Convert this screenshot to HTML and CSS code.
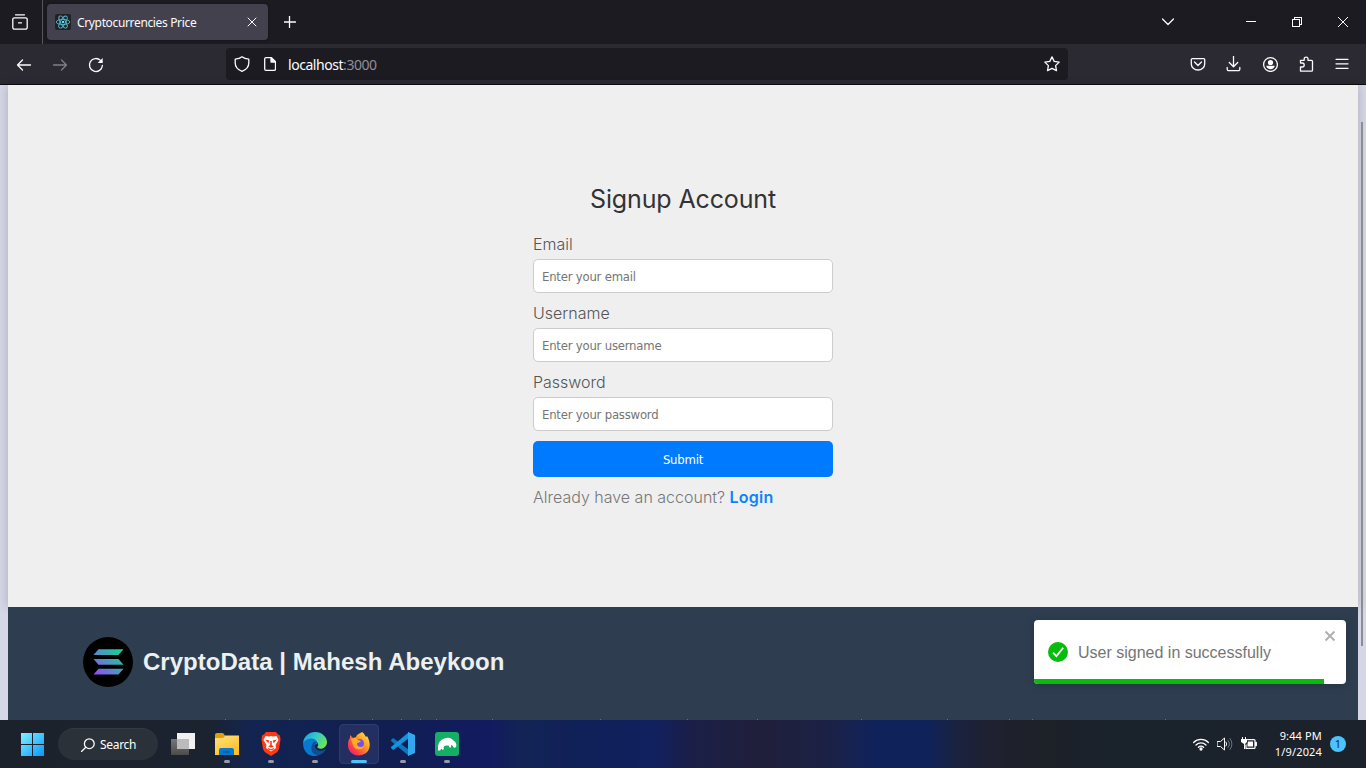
FILE: index.html
```html
<!DOCTYPE html>
<html lang="en">
<head>
<meta charset="utf-8">
<title>Cryptocurrencies Price</title>
<link rel="stylesheet" href="styles.css">
</head>
<body>
<header class="tabs">
  <div class="recent"><svg width="16" height="16" viewBox="0 0 16 16" class="line"><path d="M3.500.800h9M2.300 3.800h11.400a1.500 1.500 0 0 1 1.500 1.500v8.100a1.800 1.800 0 0 1-1.800 1.800H2.600a1.800 1.800 0 0 1-1.800-1.800V5.300a1.500 1.500 0 0 1 1.500-1.500zM6.500 8.800h3"/></svg></div>
  <div class="tab">
    <svg width="16" height="16" viewBox="0 0 16 16"><rect width="16" height="16" rx="2" fill="#222"/><g fill="none" stroke="#53b9d1" stroke-width=".9"><ellipse cx="8" cy="8" rx="6.800" ry="2.600"/><ellipse cx="8" cy="8" rx="6.800" ry="2.600" transform="rotate(60 8 8)"/><ellipse cx="8" cy="8" rx="6.800" ry="2.600" transform="rotate(120 8 8)"/></g><circle cx="8" cy="8" r="1.300" fill="#61dafb"/></svg>
    <span class="tab-title">Cryptocurrencies Price</span>
    <svg width="10" height="10" viewBox="0 0 10 10" class="line thin"><path d="M1 1l8 8M9 1L1 9"/></svg>
  </div>
  <svg class="line plus" width="12" height="12" viewBox="0 0 12 12"><path d="M5.500 0v11.500M0 6h11.500"/></svg>
  <div class="window">
    <svg class="line" width="12" height="12" viewBox="0 0 12 12"><path d="M.5 3l5.500 5.500L11.500 3"/></svg>
    <svg class="crisp" width="10" height="10" viewBox="0 0 10 10"><path d="M0 4.500h10"/></svg>
    <svg class="crisp" width="10" height="10" viewBox="0 0 10 10"><path d="M.5 2.500h7v7h-7zM2.500 2V.5h7v7H8"/></svg>
    <svg class="line thin" width="10" height="10" viewBox="0 0 10 10"><path d="M0 0l10 10M10 0L0 10"/></svg>
  </div>
</header>
<nav class="toolbar">
  <div class="nav-buttons">
    <svg class="line" width="16" height="16" viewBox="0 0 16 16"><path d="M14.500 8H1.500M6.500 3L1.500 8l5 5"/></svg>
    <svg class="line dim" width="16" height="16" viewBox="0 0 16 16"><path d="M1.500 8h13M9.500 3l5 5-5 5"/></svg>
    <svg class="line" width="16" height="16" viewBox="0 0 16 16"><path d="M14.400 8.500A6.500 6.500 0 1 1 12.500 3.400l1.200 1.200"/><path d="M14.700 1v5H9.700z" fill="#fbfbfe" stroke="none"/></svg>
  </div>
  <div class="address">
    <svg class="line" width="16" height="16" viewBox="0 0 16 16"><path d="M8 .8C6 2.500 4 3 1.200 3.200V7c0 4 2.800 6.800 6.800 8.300C12 13.800 14.800 11 14.800 7V3.200C12 3 10 2.500 8 .8z"/></svg>
    <svg class="line page-icon" width="12" height="14" viewBox="0 0 12 14"><path d="M2 .7h5.500l4 4V12a1.300 1.300 0 0 1-1.300 1.300H2A1.300 1.300 0 0 1 .7 12V2A1.300 1.300 0 0 1 2 .7z"/><path d="M7 1v4h4.500z" fill="#fff"/></svg>
    <span class="url">localhost<span class="port">:3000</span></span>
    <svg class="line star" width="16" height="16" viewBox="0 0 16 16"><path d="M8 .9l2.200 4.500 5 .7-3.600 3.500.9 5L8 12.300l-4.500 2.300.9-5L.8 6.100l5-.7z"/></svg>
  </div>
  <div class="tools">
    <svg class="line" width="16" height="16" viewBox="0 0 16 16"><path d="M2.300 2.600h11.400a1 1 0 0 1 1 1V8a6.700 6 0 0 1-13.400 0V3.600a1 1 0 0 1 1-1zM4.500 6l3.500 3.500L11.500 6"/></svg>
    <svg class="line" width="16" height="16" viewBox="0 0 16 16"><path d="M7.500 0v10.500M3.300 6.500l4.200 4.200 4.200-4.200M1.200 11.500v1.700a1.500 1.500 0 0 0 1.500 1.500h9.600a1.500 1.500 0 0 0 1.500-1.500v-1.700"/></svg>
    <svg class="line" width="16" height="16" viewBox="0 0 16 16"><circle cx="8.500" cy="8.500" r="6.900"/><circle cx="8.500" cy="6.500" r="2.600" fill="#fff" stroke="none"/><path d="M4.200 9.800h8.600c-.5 2.200-2 3.400-4.300 3.400S4.700 12 4.200 9.800z" fill="#fff" stroke="none"/></svg>
    <svg class="line" width="16" height="16" viewBox="0 0 16 16"><path d="M2.500 15.200V11h1.700a2 2 0 0 0 0-4H2.500V4.300h3.700V3a1.900 1.900 0 0 1 3.800 0v1.300h3.500a1 1 0 0 1 1 1v8.900a1 1 0 0 1-1 1z"/></svg>
    <svg class="line" width="16" height="16" viewBox="0 0 16 16"><path d="M2 3.300h12M2 7.800h12M2 12.300h12"/></svg>
  </div>
</nav>
<main class="viewport">
  <div class="site">
    <section class="panel">
      <div class="signup">
        <h1>Signup Account</h1>
        <form>
          <label>Email</label><input placeholder="Enter your email">
          <label>Username</label><input placeholder="Enter your username">
          <label>Password</label><input placeholder="Enter your password">
          <button type="button">Submit</button>
        </form>
        <p>Already have an account? <a>Login</a></p>
      </div>
    </section>
    <footer class="footer">
      <div class="brand">
        <svg width="50" height="50" viewBox="0 0 50 50"><defs><linearGradient id="sol" gradientUnits="userSpaceOnUse" x1="12" y1="39" x2="38" y2="12"><stop offset="0" stop-color="#9945ff"/><stop offset=".5" stop-color="#4f93c2"/><stop offset="1" stop-color="#14d58c"/></linearGradient></defs><circle cx="25" cy="25" r="25"/><path fill="url(#sol)" d="M15.500 12.200h25L35.500 18H10.500zM10.500 22h25l5 5.800h-25zM15.500 31.800h25l-5 5.800h-25z"/></svg>
        <h2>CryptoData | Mahesh Abeykoon</h2>
      </div>
      <svg width="1350" height="1" viewBox="8 0 1350 1"><path fill="#65717e" d="M225 0h1v1h-1zM289 0h1v1h-1zM372 0h1v1h-1zM401 0h1v1h-1zM420 0h1v1h-1zM436 0h1v1h-1zM492 0h1v1h-1zM600 0h1v1h-1zM687 0h1v1h-1zM757 0h1v1h-1zM861 0h1v1h-1zM947 0h1v1h-1zM1009 0h1v1h-1zM1032 0h1v1h-1zM1165 0h1v1h-1z"/></svg>
    </footer>
  </div>
  <div class="scrollbar"></div>
  <div class="toast">
    <svg width="20" height="20" viewBox="0 0 20 20"><circle cx="10" cy="10" r="10" fill="#07bc0c"/><path d="M5 10.700l3.400 3.500L15.200 5.700" fill="none" stroke="#fff" stroke-width="1.800"/></svg>
    <span>User signed in successfully</span>
    <svg class="dismiss" width="12" height="12" viewBox="0 0 12 12"><path d="M1.500 1.500l9 9M10.500 1.500l-9 9" stroke="#b0b0b0" stroke-width="2"/></svg>
    <div class="progress"></div>
  </div>
</main>
<footer class="taskbar">
  <svg class="windows" width="23" height="23" viewBox="0 0 23 23"><defs><linearGradient id="win" x2="1" y2="1"><stop stop-color="#80f2ff"/><stop offset="1" stop-color="#0897fb"/></linearGradient></defs><path fill="url(#win)" d="M0 0h11v11H0zM12 0h11v11H12zM0 12h11v11H0zM12 12h11v11H12z"/></svg>
  <div class="search"><svg class="line" width="14" height="14" viewBox="0 0 14 14"><circle cx="8.300" cy="5.700" r="4.900"/><path d="M4.800 9.200L.5 13.500"/></svg><span>Search</span></div>
  <div class="apps">
    <div class="app"><svg width="24" height="24" viewBox="0 0 24 24"><defs><linearGradient id="task" x2="0" y2="1"><stop stop-color="#777"/><stop offset="1" stop-color="#4b4b4b"/></linearGradient></defs><path fill="#f1f1f1" d="M6 1h18v16H6z"/><path fill="url(#task)" d="M0 7h18v16H0z"/><path fill="#bbb" d="M6 7h12v10H6z"/></svg></div>
    <div class="app open"><svg width="24" height="24" viewBox="0 0 24 24"><defs><linearGradient id="folder" x2=".6" y2="1"><stop stop-color="#ffe184"/><stop offset="1" stop-color="#ffc021"/></linearGradient></defs><path fill="#dea009" d="M0 3a2 2 0 0 1 2-2h6l2 2.500L8 7H0z"/><path fill="url(#folder)" d="M0 6h8l2-2.500h14V23H0z"/><path fill="#0878cf" d="M4 23v-5q0-2 2-2h11q2 0 2 2v5z"/><path stroke="#075291" d="M8 20h7"/></svg></div>
    <div class="app open"><svg width="24" height="24" viewBox="0 0 24 24"><path fill="#ff3a12" d="M7 0h10l2 2.500 2 1 .5 4L20 17q-1 3-4 4.500L12 24l-4-2.500Q5 20 4 17L2.500 7.500 3 3.500l2-1z"/><path fill="#fff" d="M6.500 4l3.500.5L12 4l2 .5 3.500-.5L19.500 8l-3 5 .5 3-5 3.500L7 16l.5-3-3-5z"/><path fill="#ff3a12" d="M6 7.500l4.300 1-1 2.800zM18 7.500l-4.300 1 1 2.800zM11.200 9h1.600v4l2 1.500-2.800 1.200-2.800-1.200 2-1.500zM8.500 15.700l3.500 1.500 3.500-1.500-1 1.700-2.500 1.200-2.500-1.200z"/></svg></div>
    <div class="app open"><svg width="24" height="24" viewBox="0 0 24 24"><defs><linearGradient id="edge" x2="1" y2=".5"><stop stop-color="#169ddc"/><stop offset=".5" stop-color="#32c6ce"/><stop offset="1" stop-color="#66e45c"/></linearGradient></defs><path fill="#0879d0" d="M0 11C4 5 12 4 15 9l-1 3c-5 1-5 6 0 8l6 0C14 27 0 25 0 11z"/><path fill="#124e8e" d="M9 13c-2 5 1 11 7 10 3-1 6-3 7-6-4 2-9 3-11-2-1-3 1-4 2-5-2-1-4 0-5 3z"/><path fill="url(#edge)" d="M0 11C1 4 6 0 12 0c7 0 12 5 12 10 0 6-6 8-9 6-2-1 1-2 0-4C13 5 5 5 0 11z"/></svg></div>
    <div class="app open active"><svg width="24" height="24" viewBox="0 0 24 24"><defs><linearGradient id="fox" x1="1" x2="0" y2="1"><stop stop-color="#fff44f"/><stop offset=".4" stop-color="#ff9a20"/><stop offset=".75" stop-color="#ff3750"/><stop offset="1" stop-color="#e31587"/></linearGradient></defs><path fill="url(#fox)" d="M15 0c3 2 3 4 4 5l1-1c5 8 3 17-5 19C7 25 1 20 1 13 1 9 2 7 3 6l0-3 3 3 3-1c1-3 5-4 6-5z"/><circle cx="12.500" cy="11.500" r="4.500" fill="#7352e8"/><path fill="#ffad24" d="M4 7c3-2 6-1 7 1l3 1c-1 2-4 1-4 3 0 3 4 4 7 2-2 5-10 4-11-1z"/></svg></div>
    <div class="app open"><svg width="24" height="24" viewBox="0 0 24 24"><path fill="#0879bd" d="M0 8l2.200-2L18 18v6L0 9z"/><path fill="#1494dc" d="M0 16l2.200 2L18 6V0L0 15z"/><path fill="#32a8f0" d="M17 0l7 3v18l-7 3z"/></svg></div>
    <div class="app open"><svg width="24" height="24" viewBox="0 0 24 24"><rect width="24" height="24" rx="3" fill="#16ad67"/><path fill="#fff" d="M3 16c0-6 3-9 8-10 4-1 6 1 8 3 2 1 3 4 2 6-1 1-3 1-3-1l-2-1 0 2.500-1.500 0-1-2c-3 0-4 0-5 2l.5 1.500-1.500 1-1-1.500-1.500 2H3z"/></svg></div>
  </div>
  <div class="tray">
    <svg class="line" width="16" height="14" viewBox="0 0 16 14"><path d="M.6 5.500a10.500 10.500 0 0 1 14.800 0M3 8a7 7 0 0 1 10 0M5.400 10.300a3.700 3.700 0 0 1 5.200 0"/><circle cx="8" cy="12" r="1" fill="#fff"/></svg>
    <svg class="line thin" width="16" height="14" viewBox="0 0 16 14"><path d="M.5 4.500h3L7.500 1v12L3.500 9.500h-3zM9 5q1.500 2 0 4"/><path stroke="#6e737b" d="M11 3.500q3 3.500 0 7M13 1.500q4 5.500 0 11"/></svg>
    <svg class="line" width="16" height="14" viewBox="0 0 16 14"><path d="M6.500 2.600H13a1 1 0 0 1 1 1v6.800a1 1 0 0 1-1 1H5V8M15.300 5.500v3"/><path fill="#fff" stroke="none" d="M7 4.500h5v5H6.500V7zM1 0h1v2h2V0h1v2h1v3L4 7v5H3V7L0 5V2h1z"/></svg>
    <div class="clock"><span>9:44 PM</span><span>1/9/2024</span></div>
    <span class="count">1</span>
  </div>
</footer>
</body>
</html>
```
FILE: styles.css
```css
* { box-sizing: border-box; }
body { margin: 0; width: 1366px; height: 768px; overflow: hidden; display: flex; flex-direction: column; font-family: "Noto Sans", sans-serif; }
svg { display: block; flex: none; }
.line { fill: none; stroke: #fbfbfe; stroke-width: 1.3; stroke-linecap: round; stroke-linejoin: round; }
.thin { stroke-width: 1; }
.crisp { fill: none; stroke: #fff; shape-rendering: crispEdges; }
.dim { opacity: .4; }
.tabs { height: 44px; flex: none; display: flex; align-items: center; background: #1c1b22; }
.recent { width: 43px; height: 44px; padding: 14px 0 0 12px; border-right: 1px solid #56555e; }
.tab { width: 221px; height: 36px; margin-left: 4px; padding: 0 11px 0 8px; display: flex; align-items: center; border-radius: 4px; background: #42414d; color: #fbfbfe; box-shadow: 0 0 3px #0006; }
.tab-title { flex: 1; margin-left: 6px; font-size: 12px; letter-spacing: -.35px; white-space: nowrap; }
.plus { margin-left: 16px; }
.window { margin-left: auto; padding-right: 18px; display: flex; align-items: center; }
.window svg + svg { margin-left: 36px; }
.window svg:nth-child(2) { margin-left: 72px; }
.toolbar { height: 41px; flex: none; display: flex; align-items: center; background: #2b2a33; border-bottom: 1px solid #0c0c0d; }
.nav-buttons { width: 226px; padding: 1px 0 0 16px; display: flex; gap: 20px; }
.address { width: 842px; height: 32px; padding: 0 8px; display: flex; align-items: center; border-radius: 4px; background: #1c1b22; }
.page-icon { margin-left: 14px; }
.url { margin-left: 12px; padding-top: 1px; color: #fbfbfe; font-size: 14px; letter-spacing: -.45px; }
.port { color: #8f8e96; }
.star { margin-left: auto; }
.tools { margin-left: auto; padding-right: 16px; display: flex; gap: 20px; }
.viewport { height: 635px; flex: none; position: relative; padding: 0 8px; background: #d5d7e6; }
.site { width: 1350px; height: 635px; }
.panel { height: 522px; background: #efefef; box-shadow: 0 0 10px #0003; }
.signup { width: 300px; margin: 0 auto; padding-top: 97px; font-family: Inter, sans-serif; }
.signup h1 { margin: 0; height: 51px; text-align: center; font-size: 25px; line-height: 34px; font-weight: 400; color: #333; letter-spacing: -.13px; }
.signup form { display: flex; flex-direction: column; }
.signup label { height: 26px; line-height: 23px; font-size: 16px; font-weight: 300; color: #555; }
.signup input { height: 34px; margin: 0 0 9px; padding: 1px 8px 0; border: 1px solid #ccc; border-radius: 5px; background: #fff; font: 13px "DejaVu Sans Condensed", "DejaVu Sans", sans-serif; letter-spacing: -.22px; }
.signup input::placeholder { color: #757575; opacity: 1; }
.signup button { height: 36px; margin-top: 1px; border: 0; border-radius: 5px; background: #007bff; color: #fff; font: 13px "DejaVu Sans Condensed", "DejaVu Sans", sans-serif; letter-spacing: -.22px; }
.signup p { margin: 9px 0 0; line-height: 22px; font-size: 16px; font-weight: 300; color: #777; white-space: nowrap; }
.signup a { color: #0a84ff; font-weight: 600; letter-spacing: .2px; }
.footer { position: relative; height: 113px; padding-top: 30px; display: flex; flex-direction: column; justify-content: space-between; background: #2e3e50; }
.brand { display: flex; gap: 10px; padding-left: 75px; }
.footer h2 { margin: 0; line-height: 50px; font-family: "Liberation Sans", sans-serif; font-size: 24px; color: #ecf0f1; letter-spacing: .03px; }
.scrollbar { position: absolute; right: 3px; top: 37px; width: 2px; height: 524px; background: #8c8c91; }
.toast { position: absolute; right: 20px; bottom: 36px; width: 312px; height: 64px; padding: 0 14px; display: flex; align-items: center; gap: 10px; border-radius: 4px; background: #fff; box-shadow: 0 1px 10px #0003; overflow: hidden; color: #757575; font: 16px "Liberation Sans", sans-serif; }
.toast span { padding-top: 1px; }
.dismiss { position: absolute; right: 10px; top: 10px; }
.progress { position: absolute; left: 0; bottom: 0; width: 290px; height: 5px; background: #07bc0c; }
.taskbar { height: 48px; flex: none; display: flex; align-items: center; padding-left: 21px; background: linear-gradient(90deg, #1c222b 0, #1b2330 210px, #132450 250px, #101e52 390px, #121b60 490px, #122355 520px, #10205a 600px, #11205f 655px, #1b1f48 690px, #201f3b 760px, #1b2145 830px, #11225a 870px, #10225a 930px, #1a223f 957px, #1e2130 990px, #1e2128 1040px, #1a222b 1100px, #1c222b); color: #fff; }
.search { width: 100px; height: 32px; margin-left: 14px; padding-left: 23px; display: flex; align-items: center; gap: 5px; border-radius: 16px; background: #2b3139; border-top: 1px solid #343a42; font-size: 12px; letter-spacing: -.3px; }
.apps { display: flex; margin-left: 5px; gap: 4px; }
.app { width: 40px; height: 40px; padding: 8px 8px 0; border-radius: 4px; position: relative; }
.open::after { content: ""; position: absolute; left: 17px; bottom: 1px; width: 6px; height: 3px; border-radius: 2px; background: #969ba6; }
.active { background: #232f60; border: 1px solid #303b69; padding: 7px; }
.active::after { left: 11px; bottom: 0; width: 16px; background: #4cc2ff; }
.tray { margin-left: auto; padding-right: 20px; display: flex; align-items: center; gap: 8px; }
.clock { width: 57px; display: flex; flex-direction: column; align-items: flex-end; font-size: 11px; line-height: 16px; letter-spacing: .15px; }
.count { width: 16px; height: 16px; border-radius: 50%; background: #4cc2ff; color: #152a39; text-align: center; font-size: 11px; line-height: 16px; }
```
